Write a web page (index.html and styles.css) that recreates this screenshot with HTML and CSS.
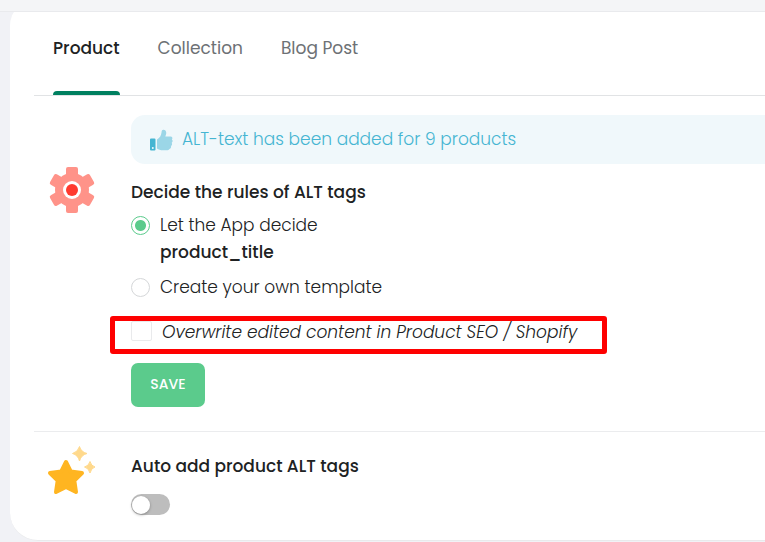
FILE: index.html
```html
<!DOCTYPE html>
<html lang="en">

<head>
  <meta charset="UTF-8">
  <meta name="viewport" content="width=device-width, initial-scale=1.0">
  <title>ALT tags</title>
  <link rel="stylesheet" href="styles.css">
</head>

<body>
  <header class="topbar"></header>
  <main class="card">
    <nav class="tabs">
      <a class="tab active" href="#product">Product</a>
      <a class="tab" href="#collection">Collection</a>
      <a class="tab" href="#blog-post">Blog Post</a>
    </nav>

    <section class="row" id="product">
      <div class="row-icon">
        <svg width="46" height="48" viewBox="0 0 46 48">
          <g fill="#ff9389">
            <circle cx="23" cy="24" r="17"/>
            <path id="tooth" d="M17 10V3q0-2 2-2h8q2 0 2 2v7z"/>
            <use href="#tooth" transform="rotate(60 23 24)"/>
            <use href="#tooth" transform="rotate(120 23 24)"/>
            <use href="#tooth" transform="rotate(180 23 24)"/>
            <use href="#tooth" transform="rotate(240 23 24)"/>
            <use href="#tooth" transform="rotate(300 23 24)"/>
          </g>
          <circle cx="23" cy="24" r="9" fill="#fff"/>
          <circle cx="23" cy="24" r="6" fill="#ff3a2f"/>
        </svg>
      </div>
      <div class="row-body">
        <div class="notice">
          <svg width="24" height="24" viewBox="0 0 24 24">
            <path fill="#9bd6e7" d="M8 11.500C11 9.500 12.200 7.500 12.500 4.500C12.700 2 13.500 1.500 14.800 1.700C17 2 17.800 4.500 17 6.500L16.300 8.500H21.500C23.300 8.500 24 10 22.900 11.500C24 12.500 23.800 14 22.700 14.700C23.500 16 23 17.300 22 18C22.400 19.300 21.800 20.600 20.500 21C20 22 19 22.300 17.500 22.300H14C11.500 22.300 9.500 21.500 8 20.500Z"/>
            <path fill="#45b5d2" fill-rule="evenodd" d="M2 10.500H5.500Q6.500 10.500 6.500 11.500V21.500Q6.500 22.500 5.500 22.500H2Q1 22.500 1 21.500V11.500Q1 10.500 2 10.500ZM3.800 19A1 1 0 1 0 3.800 21A1 1 0 1 0 3.800 19Z"/>
          </svg>
          <span>ALT-text has been added for 9 products</span>
        </div>
        <form class="rules">
          <h2 class="title">Decide the rules of ALT tags</h2>
          <label class="option">
            <input class="radio" type="radio" name="rule" checked>
            <span>Let the App decide<br><b class="tag">product_title</b></span>
          </label>
          <label class="option">
            <input class="radio" type="radio" name="rule">
            <span>Create your own template</span>
          </label>
          <label class="option overwrite">
            <input class="check" type="checkbox" name="overwrite">
            <em>Overwrite edited content in Product SEO / Shopify</em>
          </label>
          <button class="save" type="button">SAVE</button>
        </form>
      </div>
    </section>

    <section class="row auto">
      <div class="row-icon">
        <svg width="50" height="50" viewBox="0 0 50 50">
          <path fill="#ffb521" stroke="#ffb521" stroke-width="4" stroke-linejoin="round" d="M19 16L23.700 25.500L35 27L27.300 34.500L29 46L19 41L9 46L10.700 34.500L3 27L14.300 25.500Z"/>
          <path fill="#ffd98c" stroke="#ffd98c" stroke-linejoin="round" d="M32.500 0.500Q34 6 40 7.500Q34 9 32.500 15Q31 9 25.500 7.500Q31 6 32.500 0.500ZM43 15.500Q44.200 20 48 21Q44.200 22 43 27Q41.800 22 37.500 21Q41.800 20 43 15.500Z"/>
        </svg>
      </div>
      <div class="row-body">
        <label class="title" for="auto-add">Auto add product ALT tags</label>
        <input class="switch" type="checkbox" id="auto-add">
      </div>
    </section>
  </main>
</body>

</html>
```
FILE: styles.css
```css
*,
*::before,
*::after {
  box-sizing: border-box;
}

body {
  margin: 0;
  background-color: #f1f2f6;
  color: #202223;
  font-family: Poppins, Inter, sans-serif;
  font-size: 17px;
  font-weight: 300;
  line-height: 27px;
  overflow: hidden;
}

.topbar {
  position: relative;
  z-index: 1;
  height: 12px;
  background-color: #f4f5f7;
  border-bottom: 1px solid #e9eaed;
}

.card {
  margin: -14px 0 0 10px;
  padding: 14px 0 25px 24px;
  background-color: #fff;
  border-bottom: 1px solid #e9eaec;
  border-radius: 28px 0 0 28px;
}

.tabs {
  display: flex;
  gap: 38px;
  height: 84px;
  padding-left: 19px;
  border-bottom: 1px solid #e1e3e5;
}

.tab {
  padding-top: 23px;
  border-bottom: 4px solid transparent;
  color: #6d7175;
  font-weight: 400;
  text-decoration: none;
}

.tab.active {
  position: relative;
  color: #202223;
  font-weight: 500;
}

.tab.active::after {
  content: "";
  position: absolute;
  right: 0;
  bottom: -4px;
  left: 0;
  height: 4px;
  background-color: #008060;
  border-radius: 4px 4px 0 0;
}

.row {
  display: flex;
  padding-top: 19px;
}

.row-icon {
  width: 97px;
  padding: 51px 0 0 15px;
}

.row-body {
  flex: 1;
}

.notice {
  display: flex;
  align-items: center;
  gap: 9px;
  height: 49px;
  padding-left: 18px;
  background-color: #f0f8fb;
  border-radius: 14px 0 0 14px;
  color: #45b5d2;
}

.rules {
  display: flex;
  flex-direction: column;
  align-items: flex-start;
  padding: 15px 0 24px;
}

.title {
  display: block;
  margin: 0;
  font-size: 17px;
  font-weight: 500;
  line-height: 27px;
}

.option {
  display: flex;
  gap: 10px;
  margin-top: 6px;
}

.option + .option {
  margin-top: 8px;
}

.tag {
  font-weight: 500;
}

.radio,
.check,
.switch {
  flex: none;
  appearance: none;
  margin: 0;
  background-color: #fff;
}

.radio {
  width: 19px;
  height: 19px;
  margin-top: 4px;
  border: 1px solid #d5d7d9;
  border-radius: 50%;
}

.radio:checked {
  border-color: #5bcb8c;
  background: radial-gradient(circle, #5bcb8c 5px, #fff 6px);
}

.option.overwrite {
  position: relative;
  margin-top: 18px;
}

/* highlight frame round the overwrite option */
.overwrite::after {
  content: "";
  position: absolute;
  top: -3px;
  right: -30px;
  bottom: -8px;
  left: -21px;
  border: 5px solid #fe0000;
  border-radius: 3px;
}

.check {
  width: 21px;
  height: 20px;
  margin-top: 2px;
  border: 1px solid #e9eaec;
  border-radius: 2px;
}

.save {
  width: 74px;
  height: 44px;
  margin-top: 17px;
  padding: 0 0 2px;
  border: 0;
  border-radius: 7px;
  background-color: #5bcb8c;
  color: #fff;
  font-family: inherit;
  font-size: 14px;
  font-weight: 500;
}

.auto {
  padding-top: 21px;
  border-top: 1px solid #ebecee;
}

.auto .row-icon {
  padding: 0 0 0 13px;
  margin-top: -7px;
}

.switch {
  display: flex;
  align-items: center;
  width: 39px;
  height: 21px;
  margin-top: 14px;
  padding: 1px;
  border-radius: 11px;
  background-color: #bdbdbd;
}

.switch::before {
  content: "";
  width: 18px;
  height: 18px;
  border-radius: 50%;
  background-color: #fff;
  box-shadow: 0 1px 3px rgba(0, 0, 0, .3);
}

.switch:checked {
  justify-content: flex-end;
  background-color: #5bcb8c;
}
```
